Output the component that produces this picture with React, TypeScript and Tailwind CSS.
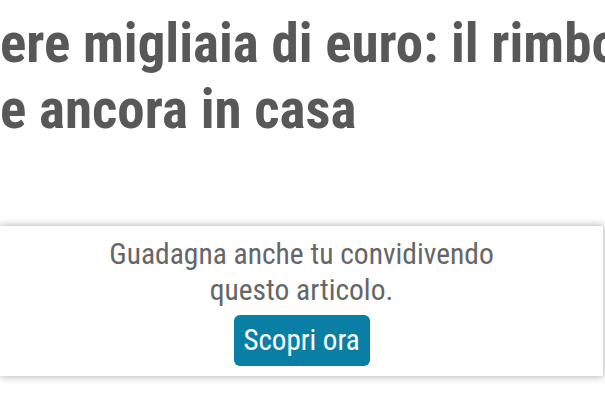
export default function App() {
  return (
    <div className="min-h-screen w-[605px] h-[407px] overflow-hidden bg-white font-['Roboto',sans-serif]">
      {/* Article title, cut at the left edge */}
      <h1 className="pt-[10px] text-[55px] leading-[66px] font-bold font-stretch-condensed text-[#585858] whitespace-nowrap overflow-hidden">
        <div>ere migliaia di euro: il rimborso</div>
        <div>e ancora in casa</div>
      </h1>

      {/* Share box */}
      <div className="mt-[84px] w-[604px] h-[150px] bg-white border-r border-[#ddd] shadow-[0_0_8px_rgba(0,0,0,0.35)] flex flex-col items-center pt-[10px]">
        <p className="text-[29.5px] leading-[36px] text-center text-[#666] font-stretch-condensed">
          Guadagna anche tu convidivendo
          <br />
          questo articolo.
        </p>
        <button className="mt-[7px] w-[136px] h-[51px] rounded-[6px] bg-[#0a7fa6] text-white text-[29px] leading-none font-stretch-condensed">
          Scopri ora
        </button>
      </div>
    </div>
  );
}
